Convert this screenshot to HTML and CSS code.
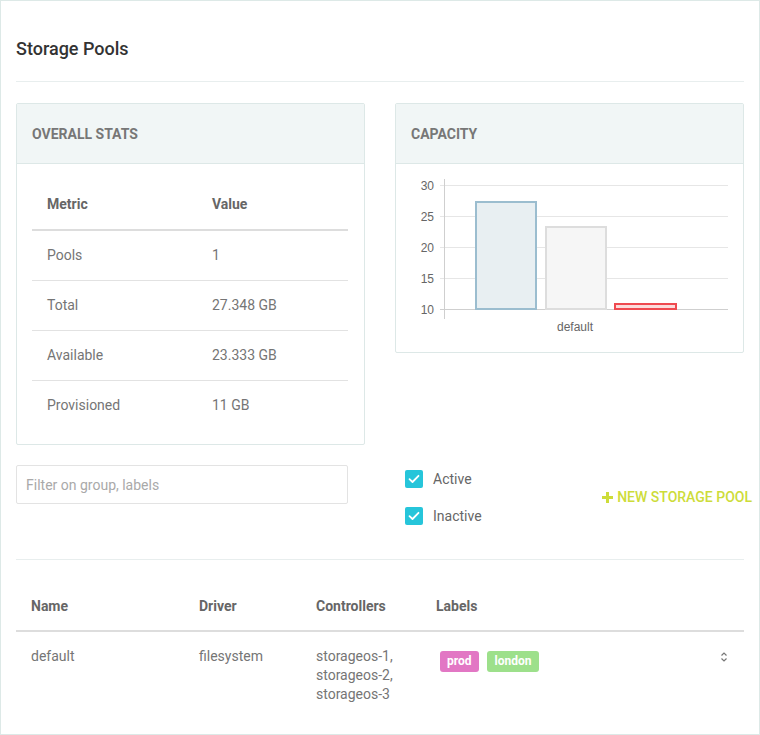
FILE: index.html
```html
<!DOCTYPE html>
<html>
<head>
<meta charset="utf-8">
<link rel="stylesheet" href="styles.css">
</head>
<body>
<div class="frame">
  <div class="page-header"><h1 class="title">Storage Pools</h1></div>

  <div class="cards">
    <div class="card">
      <div class="card-header">OVERALL STATS</div>
      <div class="card-body stats-body">
        <table class="stats">
          <colgroup><col class="col-metric"><col class="col-value"></colgroup>
          <thead><tr><th>Metric</th><th>Value</th></tr></thead>
          <tbody>
            <tr><td>Pools</td><td>1</td></tr>
            <tr><td>Total</td><td>27.348 GB</td></tr>
            <tr><td>Available</td><td>23.333 GB</td></tr>
            <tr><td>Provisioned</td><td>11 GB</td></tr>
          </tbody>
        </table>
      </div>
    </div>
    <div class="card">
      <div class="card-header">CAPACITY</div>
      <div class="card-body chart-body">
        <svg class="chart" width="347" height="188" viewBox="0 0 347 188">
          <g stroke="#e6e6e6" stroke-width="1">
            <line x1="44" y1="21.5" x2="332" y2="21.5"/>
            <line x1="44" y1="52.5" x2="332" y2="52.5"/>
            <line x1="44" y1="83.5" x2="332" y2="83.5"/>
            <line x1="44" y1="114.5" x2="332" y2="114.5"/>
          </g>
          <line x1="44" y1="145.5" x2="332" y2="145.5" stroke="#cfcfcf"/>
          <line x1="48.5" y1="15" x2="48.5" y2="155" stroke="#cfcfcf"/>
          <g class="ylab" text-anchor="end">
            <text x="38" y="25.5">30</text>
            <text x="38" y="56.5">25</text>
            <text x="38" y="87.5">20</text>
            <text x="38" y="118.5">15</text>
            <text x="38" y="149.5">10</text>
          </g>
          <rect x="80" y="38" width="60" height="107" fill="#e8eff2" stroke="#9bbdcf" stroke-width="2"/>
          <rect x="150" y="63" width="60" height="82" fill="#f6f6f6" stroke="#dddddd" stroke-width="2"/>
          <rect x="219" y="140" width="61" height="5" fill="#fcdcdc" stroke="#ef4a50" stroke-width="2"/>
          <text class="xlab" x="179" y="166.5" text-anchor="middle">default</text>
        </svg>
      </div>
    </div>
  </div>

  <div class="controls">
    <input class="filter" type="text" placeholder="Filter on group, labels">
    <div class="checks">
      <label class="check"><span class="box"><svg width="12" height="10" viewBox="0 0 12 10"><path d="M1.5 5.2 L4.5 8 L10.5 1.8" fill="none" stroke="#fff" stroke-width="1.8" stroke-linecap="round" stroke-linejoin="round"/></svg></span>Active</label>
      <label class="check"><span class="box"><svg width="12" height="10" viewBox="0 0 12 10"><path d="M1.5 5.2 L4.5 8 L10.5 1.8" fill="none" stroke="#fff" stroke-width="1.8" stroke-linecap="round" stroke-linejoin="round"/></svg></span>Inactive</label>
    </div>
    <a class="new-btn"><svg class="plus" width="11" height="11" viewBox="0 0 11 11"><path d="M4 0h3v4h4v3H7v4H4V7H0V4h4z" fill="#cddc39"/></svg>NEW STORAGE POOL</a>
  </div>

  <table class="pools">
    <thead>
      <tr><th class="p-name">Name</th><th class="p-driver">Driver</th><th class="p-ctrl">Controllers</th><th class="p-labels">Labels</th><th class="p-sort"></th></tr>
    </thead>
    <tbody>
      <tr>
        <td>default</td>
        <td>filesystem</td>
        <td>storageos-1,<br>storageos-2,<br>storageos-3</td>
        <td><span class="badge prod">prod</span><span class="badge london">london</span></td>
        <td class="sort-cell"><svg width="8" height="12" viewBox="0 0 8 12"><path d="M1.5 4.5 L4 2 L6.5 4.5 M1.5 7.5 L4 10 L6.5 7.5" fill="none" stroke="#777" stroke-width="1.2"/></svg></td>
      </tr>
    </tbody>
  </table>
</div>
</body>
</html>
```

FILE: styles.css
```css
* { box-sizing: border-box; }
html, body { margin: 0; padding: 0; background: #fff; }
body { font-family: Roboto, "Liberation Sans", sans-serif; color: #666; }

.frame {
  width: 760px;
  height: 735px;
  border: 1px solid #dde9e7;
  padding: 0 15px;
  overflow: hidden;
}

.page-header {
  height: 81px;
  padding-top: 16px;
  display: flex;
  align-items: center;
  border-bottom: 1px solid #e8eeee;
}
.title {
  margin: 0;
  font-size: 18px;
  font-weight: 500;
  color: #333;
  line-height: 24px;
}

.cards {
  display: grid;
  grid-template-columns: 349px 349px;
  column-gap: 30px;
  align-items: start;
  margin-top: 21px;
}
.card {
  border: 1px solid #dde8e7;
  border-radius: 2px;
  background: #fff;
}
.card-header {
  height: 60px;
  background: #f1f6f6;
  border-bottom: 1px solid #dde8e7;
  padding: 0 15px;
  display: flex;
  align-items: center;
  font-size: 14px;
  font-weight: 700;
  color: #777;
}
.stats-body { padding: 15px 15px 14px; }
.stats { width: 316px; border-collapse: collapse; table-layout: fixed; font-size: 14px; }
.col-metric { width: 165px; }
.col-value { width: auto; }
.stats th, .stats td {
  padding: 0 15px;
  text-align: left;
  vertical-align: middle;
}
.stats th { height: 51px; font-weight: 700; color: #666; border-bottom: 2px solid #dddddd; }
.stats td { height: 50px; color: #757575; border-bottom: 1px solid #e2e2e2; }
.stats tbody tr:last-child td { border-bottom: none; }

.chart-body { height: 188px; }
.chart { display: block; }
.ylab text, .xlab { font-family: "Liberation Sans", Arial, sans-serif; font-size: 12px; fill: #666; }

.controls {
  display: flex;
  align-items: flex-start;
  margin-top: 20px;
  height: 95px;
  border-bottom: 1px solid #e8eeee;
}
.filter {
  width: 332px;
  height: 39px;
  border: 1px solid #e3e3e3;
  border-radius: 2px;
  padding: 0 9px;
  font-family: Roboto, "Liberation Sans", sans-serif;
  font-size: 14px;
  color: #666;
  outline: none;
}
.filter::placeholder { color: #a9a9a9; }
.checks {
  margin-left: 57px;
  padding-top: 5px;
  display: flex;
  flex-direction: column;
  row-gap: 19px;
}
.check {
  display: flex;
  align-items: center;
  height: 18px;
  font-size: 14px;
  color: #666;
}
.box {
  width: 18px;
  height: 18px;
  border-radius: 2px;
  background: #26c5da;
  display: flex;
  align-items: center;
  justify-content: center;
  margin-right: 10px;
}
.new-btn {
  margin-left: auto;
  margin-right: -8px;
  margin-top: 24px;
  display: flex;
  align-items: center;
  font-size: 14px;
  font-weight: 500;
  color: #cddc39;
  white-space: nowrap;
}
.plus { margin-right: 4px; }

.pools {
  width: 100%;
  border-collapse: collapse;
  margin-top: 21px;
  font-size: 14px;
}
.pools th {
  height: 50px;
  text-align: left;
  padding: 0 15px;
  font-weight: 700;
  color: #666;
  border-bottom: 2px solid #dddddd;
  vertical-align: middle;
}
.pools td {
  padding: 15px 15px;
  vertical-align: top;
  line-height: 19px;
  color: #757575;
}
.p-name { width: 168px; }
.p-driver { width: 117px; }
.p-ctrl { width: 120px; }
.p-labels { width: 200px; }
.sort-cell { text-align: right; }
.sort-cell svg { display: inline-block; margin-top: 4px; margin-right: 1px; }
.badge {
  display: inline-block;
  height: 21px;
  line-height: 21px;
  padding: 0 7px;
  border-radius: 3px;
  color: #fff;
  font-size: 12px;
  font-weight: 700;
  margin-top: 4px;
  margin-right: 8px;
  vertical-align: top;
}
.prod { background: #e277c4; margin-left: 4px; }
.london { background: #9de08b; padding: 0 8px; }
```
